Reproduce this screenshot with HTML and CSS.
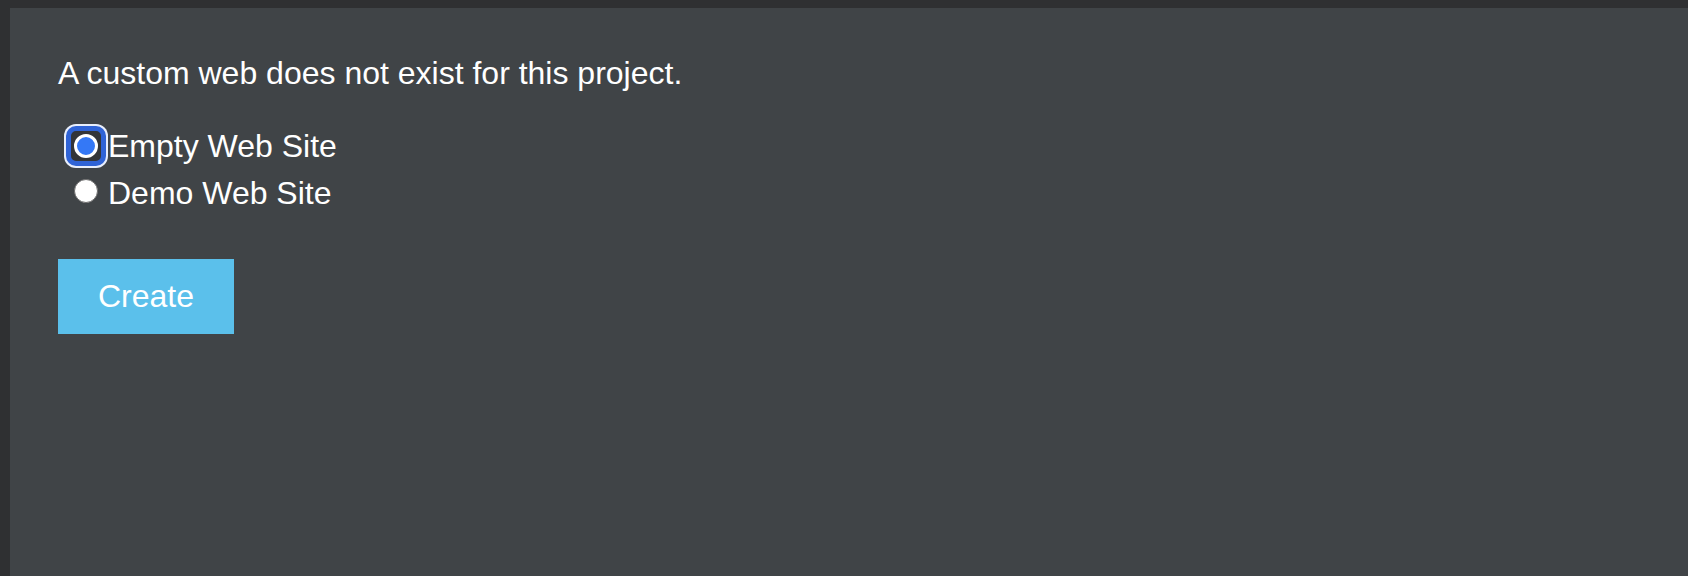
FILE: index.html
```html
<!DOCTYPE html>
<html lang="en">
<head>
<meta charset="utf-8">
<title>Custom web</title>
<link rel="stylesheet" href="styles.css">
</head>
<body>
<main class="panel">
  <p class="message">A custom web does not exist for this project.</p>
  <div class="options">
    <label class="option">
      <span class="ring ring-focused"><input type="radio" name="site" class="radio" checked></span>
      <span class="option-label">Empty Web Site</span>
    </label>
    <label class="option option-second">
      <span class="ring"><input type="radio" name="site" class="radio"></span>
      <span class="option-label">Demo Web Site</span>
    </label>
  </div>
  <button class="create-btn" type="button">Create</button>
</main>
</body>
</html>
```
FILE: styles.css
```css
html, body {
  margin: 0;
  height: 100%;
}

body {
  background: #2f3032;
  padding: 8px 0 0 10px;
  box-sizing: border-box;
  font-family: "Liberation Sans", Arial, sans-serif;
  color: #ffffff;
}

.panel {
  background: #404447;
  height: 100%;
  box-sizing: border-box;
  padding: 47px 48px 0;
}

.message {
  margin: 0;
  font-size: 32px;
  line-height: 37px;
}

.options {
  margin-top: 31px;
  display: flex;
  flex-direction: column;
}

.option {
  display: flex;
  align-items: center;
  height: 45px;
  font-size: 32px;
  line-height: 45px;
}

.option-label {
  padding-top: 2px;
}

.option-second .option-label {
  padding-top: 5px;
}

.ring {
  display: inline-flex;
  box-sizing: border-box;
  width: 40px;
  height: 40px;
  padding: 3px;
  border: 5px solid transparent;
  border-radius: 10px;
  margin-left: 8px;
  margin-right: 2px;
}

.ring-focused {
  border-color: #2f63d6;
  background: #333538;
  box-shadow: 0 0 0 2px #e8eefc;
}

.radio {
  appearance: none;
  -webkit-appearance: none;
  margin: 0;
  box-sizing: border-box;
  width: 24px;
  height: 24px;
  border-radius: 50%;
  background: #ffffff;
  border: 1.5px solid #6e6e6e;
}

.radio:checked {
  background: #3478f6;
  border: 3px solid #ffffff;
}

.radio:focus {
  outline: none;
}

.create-btn {
  margin-top: 46px;
  display: block;
  width: 176px;
  height: 75px;
  padding: 0;
  border: none;
  background: #5bc0eb;
  color: #ffffff;
  font-family: "Liberation Sans", Arial, sans-serif;
  font-size: 32px;
  cursor: pointer;
}
```
